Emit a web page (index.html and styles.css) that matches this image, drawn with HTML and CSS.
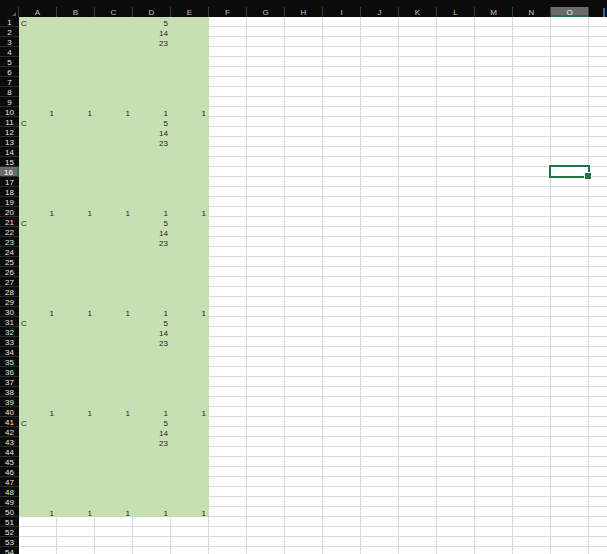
FILE: index.html
```html
<!DOCTYPE html>
<html lang="en">
<head>
<meta charset="utf-8">
<title>Sheet</title>
<link rel="stylesheet" href="styles.css">
</head>
<body>
<div class="topbar"></div>
<div class="sheet" id="sheet">
  <div class="corner"></div>
  <div class="ch">A</div>
  <div class="ch">B</div>
  <div class="ch">C</div>
  <div class="ch">D</div>
  <div class="ch">E</div>
  <div class="ch">F</div>
  <div class="ch">G</div>
  <div class="ch">H</div>
  <div class="ch">I</div>
  <div class="ch">J</div>
  <div class="ch">K</div>
  <div class="ch">L</div>
  <div class="ch">M</div>
  <div class="ch">N</div>
  <div class="ch sel">O</div>
  <div class="ch edge"></div>
</div>
<script src="app.js"></script>
</body>
</html>
```

FILE: styles.css
```css
* { box-sizing: border-box; }
html, body { margin: 0; height: 100%; overflow: hidden; background: #ffffff; }
body { font-family: "Liberation Sans", Arial, sans-serif; font-size: 8px; }

.topbar { height: 7px; background: #0b0b0b; }

.sheet {
  display: grid;
  grid-template-columns: 19px repeat(16, 38px);
  grid-auto-rows: 10px;
  width: max-content;
}

.corner {
  position: relative;
  background: #0b0b0b;
  border-right: 1px solid #3a3a3a;
}
.corner::after {
  content: "";
  position: absolute;
  right: 2px;
  bottom: 1px;
  width: 0;
  height: 0;
  border-left: 4px solid transparent;
  border-bottom: 4px solid #5a5a5a;
}

.ch {
  background: #0b0b0b;
  color: #c4c4c4;
  text-align: center;
  line-height: 10px;
  padding-top: 1px;
  border-right: 1px solid #3a3a3a;
}
.ch.sel {
  background: #6b6b6b;
  color: #f0f0f0;
  border-bottom: 2px solid #217346;
  line-height: 9px;
}
.ch.edge { position: relative; }
.ch.edge::after {
  content: "";
  position: absolute;
  right: 21px;
  top: 1px;
  width: 2px;
  height: 9px;
  background: #2a6fb8;
}

.rh {
  background: #0b0b0b;
  color: #e8e8e8;
  text-align: center;
  line-height: 9px;
  padding-top: 1px;
  border-bottom: 1px solid #2c2c2c;
}
.rh.sel {
  background: #6b6b6b;
  color: #ffffff;
  border-right: 2px solid #217346;
}

.c {
  border-right: 1px solid #dadada;
  border-bottom: 1px solid #dadada;
  line-height: 10px;
  padding: 2px 2px 0;
  white-space: nowrap;
  overflow: hidden;
  color: #1e1e1e;
}
.c.g { background: #c6e0b4; border-color: #c6e0b4; }
.c.n { text-align: right; }

.c.active { position: relative; overflow: visible; z-index: 2; }
.c.active::before {
  content: "";
  position: absolute;
  left: -2px;
  top: -2px;
  right: -2px;
  bottom: -2px;
  border: 2px solid #217346;
}
.c.active::after {
  content: "";
  position: absolute;
  right: -4px;
  bottom: -4px;
  width: 6px;
  height: 6px;
  background: #217346;
  border: 1px solid #ffffff;
}
```

FILE: app.js
```js
(function () {
  var cols = 'ABCDEFGHIJKLMNOP';
  var sheet = document.getElementById('sheet');
  var data = {};
  function set(r, c, v) { (data[r] = data[r] || {})[c] = v; }
  [0, 10, 20, 30, 40].forEach(function (k) {
    if (k) { 'ABCDE'.split('').forEach(function (c) { set(k, c, '1'); }); }
    set(k + 1, 'A', 'C');
    set(k + 1, 'D', '5');
    set(k + 2, 'D', '14');
    set(k + 3, 'D', '23');
  });
  'ABCDE'.split('').forEach(function (c) { set(50, c, '1'); });

  var frag = document.createDocumentFragment();
  for (var r = 1; r <= 54; r++) {
    var rh = document.createElement('div');
    rh.className = 'rh' + (r === 16 ? ' sel' : '');
    rh.textContent = r;
    frag.appendChild(rh);
    for (var i = 0; i < cols.length; i++) {
      var col = cols[i];
      var cell = document.createElement('div');
      var cls = 'c';
      if (r <= 50 && i < 5) cls += ' g';
      var v = data[r] && data[r][col];
      if (v) {
        cell.textContent = v;
        if (!isNaN(Number(v))) cls += ' n';
      }
      if (r === 16 && col === 'O') cls += ' active';
      cell.className = cls;
      frag.appendChild(cell);
    }
  }
  sheet.appendChild(frag);
})();
```
